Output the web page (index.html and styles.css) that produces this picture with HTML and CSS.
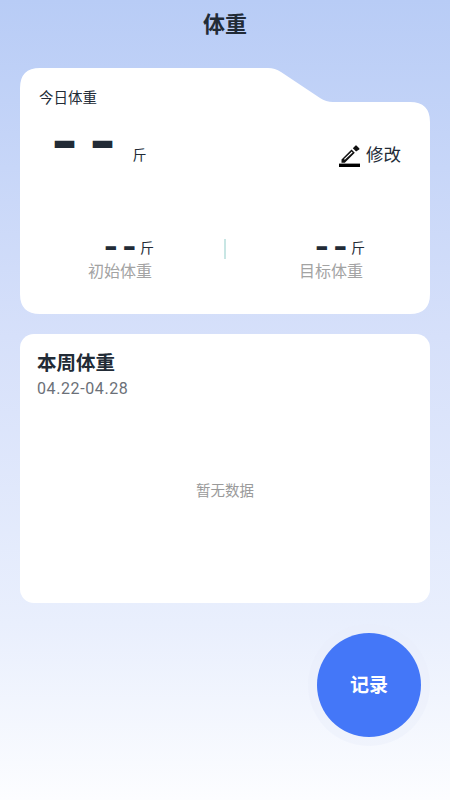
FILE: index.html
```html
<!DOCTYPE html>
<html lang="zh-CN">
<head>
    <meta charset="UTF-8">
    <meta name="viewport" content="width=device-width, initial-scale=1.0">
    <title>体重</title>
    <link rel="stylesheet" href="styles.css">
</head>
<body>
    <div class="page">
        <h1 class="title">体重</h1>

        <section class="today-card">
            <p class="today-label">今日体重</p>
            <div class="today-row">
                <div class="today-value">
                    <span class="dash-big">– –</span>
                    <span class="unit">斤</span>
                </div>
                <div class="edit">
                    <svg class="edit-icon" viewBox="0 0 22 24" width="22" height="24">
                        <path d="M2.5 16.5 L12.5 6.5 L15.8 9.8 L5.8 19.8 L2.5 19.8 Z M5 16 L12.8 8.6 L13.6 9.4 L5.8 16.8 Z" fill="#111" fill-rule="evenodd"/>
                        <path d="M13.8 5.2 L16.3 2.7 Q17 2 17.7 2.7 L20.2 5.2 Q20.9 5.9 20.2 6.6 L17.1 8.5 Z" fill="#111"/>
                        <rect x="0" y="20.6" width="21" height="3.4" fill="#000"/>
                    </svg>
                    <span>修改</span>
                </div>
            </div>
            <div class="stats">
                <div class="stat">
                    <div class="stat-value"><span class="dash-small">– –</span><span class="unit">斤</span></div>
                    <div class="stat-label">初始体重</div>
                </div>
                <div class="stat-divider"></div>
                <div class="stat">
                    <div class="stat-value"><span class="dash-small">– –</span><span class="unit">斤</span></div>
                    <div class="stat-label">目标体重</div>
                </div>
            </div>
        </section>

        <section class="week-card">
            <h2 class="week-title">本周体重</h2>
            <p class="week-range">04.22-04.28</p>
            <p class="empty">暂无数据</p>
        </section>

        <div class="record-wrap">
            <button class="record">记录</button>
        </div>
    </div>
</body>
</html>
```

FILE: styles.css
```css
* {
    box-sizing: border-box;
}
body {
    margin: 0;
    font-family: Roboto, "Noto Sans CJK SC", sans-serif;
    color: #222b36;
}
.page {
    width: 450px;
    height: 800px;
    overflow: hidden;
    padding: 0 20px;
    background: linear-gradient(180deg, #b8ccf6 0%, #d6e0fa 42%, #e9effd 78%, #fcfdff 100%);
}
.title {
    margin: 0;
    height: 68px;
    padding-top: 9px;
    font-size: 22px;
    line-height: 32px;
    font-weight: 700;
    text-align: center;
}
.today-card {
    height: 246px;
    padding: 21px 19px 0;
    background: #ffffff;
    clip-path: path("M0 20 Q0 0 20 0 L248 0 Q255 0 261 4 L300 30 Q306 34 313 34 L390 34 Q410 34 410 54 L410 226 Q410 246 390 246 L20 246 Q0 246 0 226 Z");
}
.today-label {
    margin: 0;
    font-size: 14.5px;
    line-height: 20px;
}
.today-row {
    display: flex;
    justify-content: space-between;
    align-items: flex-end;
    height: 59px;
}
.today-value {
    display: flex;
    align-items: flex-end;
    padding-left: 13px;
}
.dash-big {
    display: inline-block;
    font-size: 38px;
    line-height: 40px;
    font-weight: 900;
    margin-bottom: 3px;
    word-spacing: 5px;
    transform: scaleY(1.45);
}
.unit {
    font-size: 14px;
    line-height: 20px;
    font-weight: 400;
}
.today-value .unit {
    margin-left: 19px;
    margin-bottom: 3px;
}
.edit {
    display: flex;
    align-items: center;
    gap: 5px;
    padding-right: 10px;
    font-size: 17.5px;
    line-height: 26px;
}
.stats {
    display: flex;
    justify-content: space-between;
    align-items: flex-start;
    margin-top: 70px;
    padding: 0 48px 0 49px;
}
.stat {
    width: 64px;
}
.stat-value {
    display: flex;
    justify-content: flex-end;
    height: 23px;
    margin-right: -2px;
    line-height: 24px;
    font-size: 14px;
}
.dash-small {
    display: inline-block;
    font-size: 20px;
    line-height: 20px;
    font-weight: 900;
    margin-right: 5px;
    word-spacing: 1px;
    transform: scaleY(1.5);
}
.stat-label {
    font-size: 16px;
    line-height: 22px;
    color: #a3a3a3;
    white-space: nowrap;
}
.stat-divider {
    width: 2px;
    height: 20px;
    margin: 1px 1px 0 0;
    background: #c8e6e4;
}
.week-card {
    height: 269px;
    margin-top: 20px;
    padding: 18px 17px 0;
    background: #ffffff;
    border-radius: 14px;
}
.week-title {
    margin: 0;
    font-size: 19.5px;
    line-height: 24px;
    font-weight: 700;
}
.week-range {
    margin: 2px 0 0;
    font-size: 16px;
    line-height: 22px;
    color: #6b7078;
    letter-spacing: 0.6px;
}
.empty {
    margin: 82px 0 0;
    font-size: 14.5px;
    line-height: 20px;
    text-align: center;
    color: #9a9a9a;
}
.record-wrap {
    display: flex;
    justify-content: flex-end;
    margin-top: 30px;
    margin-right: 9px;
}
.record {
    width: 104px;
    height: 104px;
    padding: 0 0 3px;
    border: none;
    border-radius: 50%;
    background: #4477f8;
    box-shadow: 0 0 0 9px rgba(232, 237, 250, 0.45);
    color: #ffffff;
    font-family: inherit;
    font-size: 19px;
    font-weight: 700;
}
```
